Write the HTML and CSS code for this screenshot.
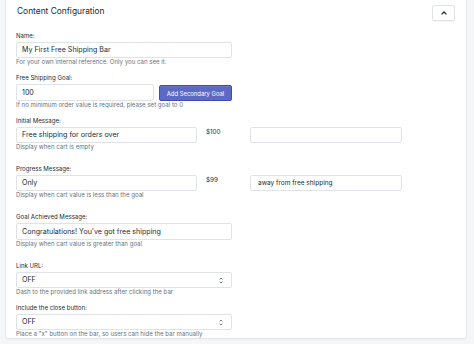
FILE: index.html
```html
<!DOCTYPE html>
<html>
<head>
<meta charset="utf-8">
<link rel="stylesheet" href="styles.css">
</head>
<body>
<div class="page">
  <div class="card">
    <div class="card-head">
      <h2 class="title">Content Configuration</h2>
      <button class="collapse" aria-label="Collapse">
        <svg width="6" height="4" viewBox="0 0 6 4"><path d="M0.6 3.4 L3 1 L5.4 3.4" fill="none" stroke="#212b36" stroke-width="1.3"/></svg>
      </button>
    </div>

    <div class="field">
      <label class="label">Name:</label>
      <div class="input wide">My First Free Shipping Bar</div>
      <div class="help">For your own internal reference. Only you can see it.</div>
    </div>

    <div class="field">
      <label class="label">Free Shipping Goal:</label>
      <div class="row">
        <div class="input goal">100</div>
        <button class="primary">Add Secondary Goal</button>
      </div>
      <div class="help">If no minimum order value is required, please set goal to 0</div>
    </div>

    <div class="field gap">
      <label class="label">Initial Message:</label>
      <div class="msg-row">
        <div class="input msg">Free shipping for orders over</div>
        <span class="amount">$100</span>
        <div class="input after"></div>
      </div>
      <div class="help">Display when cart is empty</div>
    </div>

    <div class="field gap">
      <label class="label">Progress Message:</label>
      <div class="msg-row">
        <div class="input msg">Only</div>
        <span class="amount">$99</span>
        <div class="input after small">away from free shipping</div>
      </div>
      <div class="help">Display when cart value is less than the goal</div>
    </div>

    <div class="field gap">
      <label class="label">Goal Achieved Message:</label>
      <div class="input wide tall">Congratulations! You've got free shipping</div>
      <div class="help">Display when cart value is greater than goal</div>
    </div>

    <div class="field">
      <label class="label">Link URL:</label>
      <div class="input wide select"><span>OFF</span>
        <svg class="arrows" width="4" height="7" viewBox="0 0 4 7"><path d="M0.6 2.4 L2 1 L3.4 2.4 M0.6 4.6 L2 6 L3.4 4.6" fill="none" stroke="#637381" stroke-width="0.9"/></svg>
      </div>
      <div class="help">Dash to the provided link address after clicking the bar</div>
    </div>

    <div class="field">
      <label class="label">Include the close button:</label>
      <div class="input wide select"><span>OFF</span>
        <svg class="arrows" width="4" height="7" viewBox="0 0 4 7"><path d="M0.6 2.4 L2 1 L3.4 2.4 M0.6 4.6 L2 6 L3.4 4.6" fill="none" stroke="#637381" stroke-width="0.9"/></svg>
      </div>
      <div class="help">Place a "x" button on the bar, so users can hide the bar manually</div>
    </div>
  </div>
</div>
</body>
</html>
```
FILE: styles.css
```css
html, body {
  margin: 0;
  padding: 0;
  background: #f4f6f8;
}
body {
  font-family: Inter, "Noto Sans", sans-serif;
  color: #212b36;
  width: 474px;
  height: 344px;
  overflow: hidden;
}
.page {
  padding: 0 8px 0 6px;
}
.card {
  background: #fff;
  padding: 5px 11px 0 10px;
  height: 338px;
  box-sizing: border-box;
  box-shadow: 0 0 0 1px rgba(63, 63, 68, 0.04), 0 1px 2px rgba(63, 63, 68, 0.08);
}
.card-head {
  display: flex;
  justify-content: space-between;
  align-items: flex-start;
  height: 27px;
}
.title {
  margin: 0 0 0 1px;
  font-size: 8.4px;
  line-height: 12px;
  font-weight: 400;
  color: #212b36;
}
.collapse {
  width: 23px;
  height: 16px;
  border: 1px solid #dfe3e8;
  background: #fff;
  border-radius: 2px;
  padding: 0;
  display: flex;
  align-items: center;
  justify-content: center;
  box-shadow: 0 1px 0 rgba(22, 29, 37, 0.05);
}
.field {
  margin-bottom: 8px;
}
.field.gap {
  margin-bottom: 14px;
}
.label {
  display: block;
  font-size: 6.1px;
  line-height: 8px;
  color: #212b36;
  margin-bottom: 2px;
}
.input {
  box-sizing: border-box;
  height: 16px;
  border: 1px solid #dfe3e8;
  border-radius: 2px;
  background: #fff;
  font-size: 7.1px;
  line-height: 14px;
  padding: 0 5px;
  color: #212b36;
  white-space: nowrap;
}
.input.tall { height: 17px; line-height: 15px; }
.wide { width: 216px; }
.row {
  display: flex;
  gap: 5px;
  align-items: flex-start;
}
.goal { width: 138px; height: 17px; line-height: 15px; }
.primary {
  width: 73px;
  height: 16px;
  margin-top: 1px;
  background: #5c6ac4;
  border: 1px solid #3f4eae;
  border-radius: 2px;
  color: #fff;
  font-family: Inter, "Noto Sans", sans-serif;
  font-size: 5.9px;
  padding: 0;
  box-shadow: inset 0 1px 0 0 #6774c8;
}
.help {
  font-size: 6.1px;
  line-height: 8px;
  color: #637381;
}
.msg-row {
  display: flex;
  align-items: flex-start;
}
.msg { width: 181px; }
.amount {
  width: 53px;
  padding-left: 9px;
  box-sizing: border-box;
  font-size: 6.3px;
  line-height: 9px;
  margin-top: 1px;
}
.after { width: 152px; }
.after.small { font-size: 6.5px; padding-left: 7px; }
.select {
  display: flex;
  justify-content: space-between;
  align-items: center;
}
.arrows {
  margin-right: 3px;
}
```
